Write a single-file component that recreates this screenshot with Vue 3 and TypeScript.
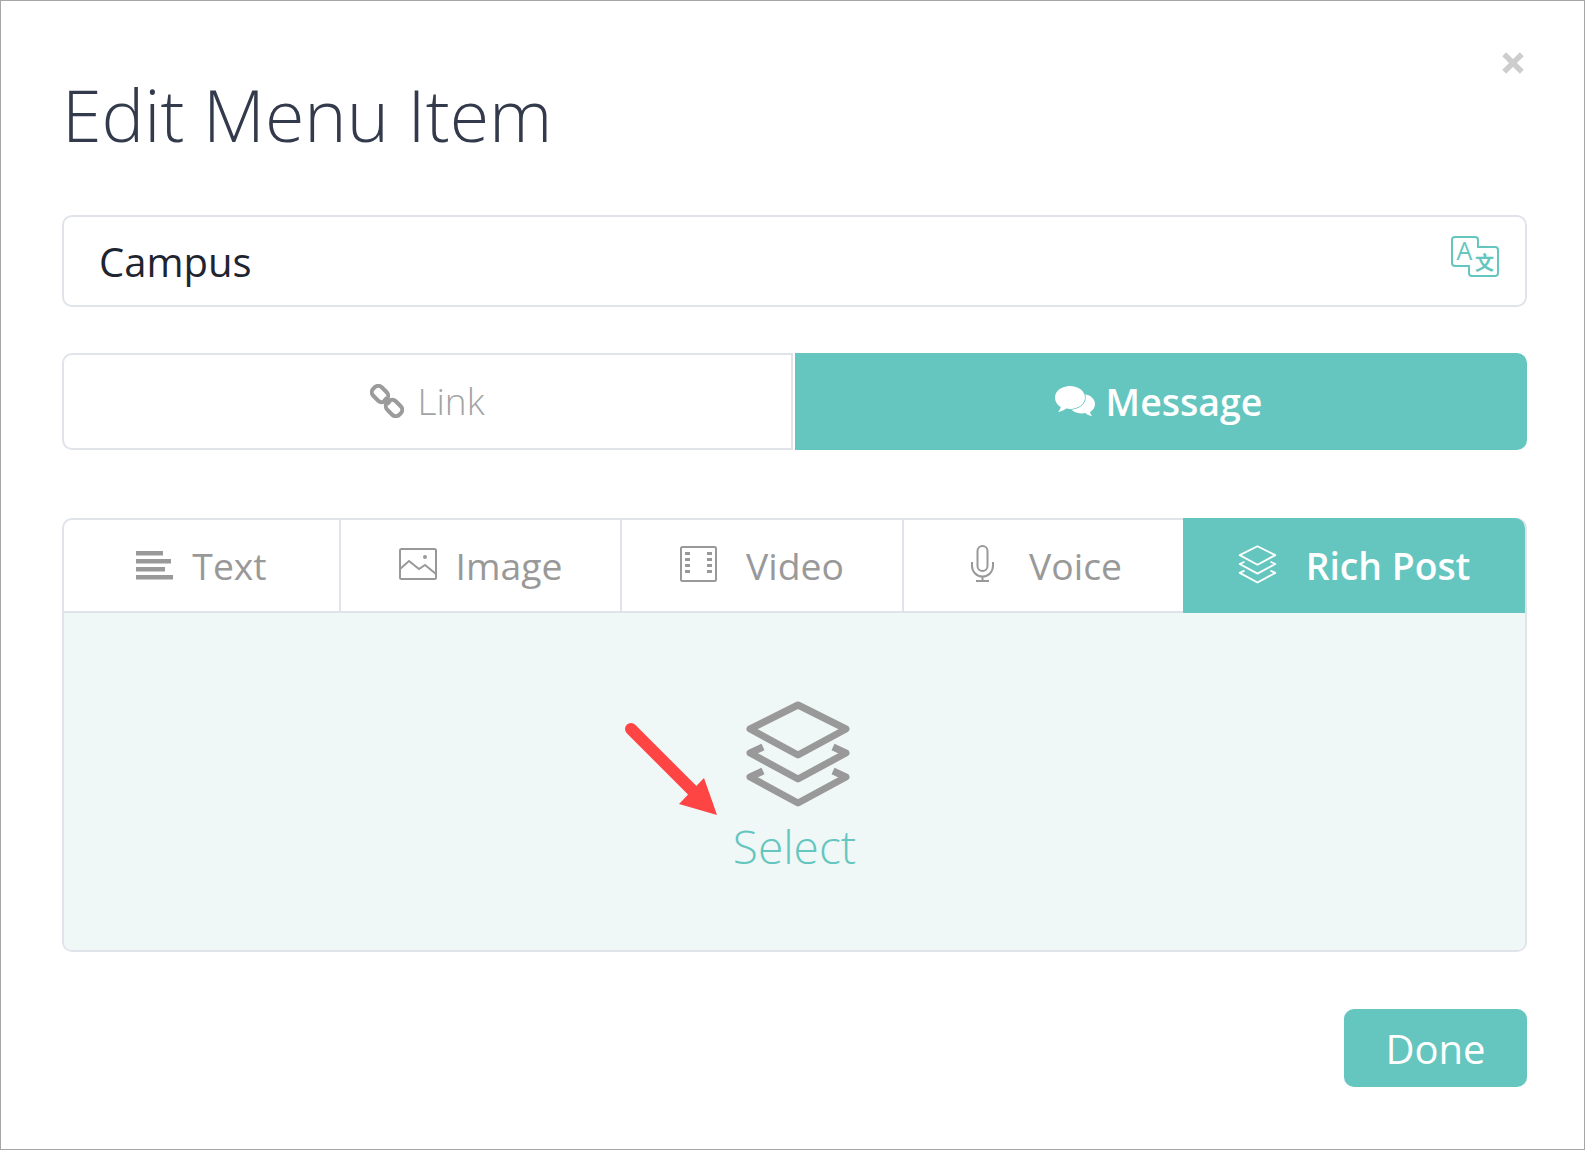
<script setup lang="ts">
const layersPath =
  'M4 30 52 6l48 24-48 26zM17 48 4 54l48 26 48-26-13-6M17 72 4 78l48 26 48-26-13-6'

const tabs = [
  { key: 'text', label: 'Text', gap: 19 },
  { key: 'image', label: 'Image', gap: 19 },
  { key: 'video', label: 'Video', gap: 29 },
  { key: 'voice', label: 'Voice', gap: 35 },
  { key: 'rich', label: 'Rich Post', gap: 29 },
]
</script>

<template>
  <div class="dialog">
    <svg class="close" viewBox="0 0 20 20">
      <path d="M2 2l16 16M18 2 2 18" />
    </svg>

    <h1 class="title">Edit Menu Item</h1>

    <div class="name-field">
      <span class="name-value">Campus</span>
      <svg class="translate" viewBox="0 0 48 41">
        <path
          class="translate-box"
          d="M4 1h20a3 3 0 0 1 3 3v7h17a3 3 0 0 1 3 3v23a3 3 0 0 1-3 3H21a3 3 0 0 1-3-3v-7H4a3 3 0 0 1-3-3V4a3 3 0 0 1 3-3z"
        />
        <text class="translate-a" x="5.500" y="24">A</text>
        <text class="translate-b" x="24" y="34">文</text>
      </svg>
    </div>

    <div class="mode-toggle">
      <div class="mode mode-link">
        <svg class="link-icon" viewBox="0 0 34 34">
          <rect x="1.500" y="4" width="17" height="12" rx="5" transform="rotate(45 10 10)" />
          <rect x="15.500" y="18" width="17" height="12" rx="5" transform="rotate(45 24 24)" />
          <path d="M14 14l6 6" />
        </svg>
        <span>Link</span>
      </div>
      <div class="mode mode-message">
        <svg class="message-icon" viewBox="0 0 40 31">
          <path
            class="bubble"
            d="M27 8c7 0 13 4 13 10 0 3.500-2 6.500-5 8 .4 1.500 1.200 3 2.200 4-2.700-.2-5-1.300-6.800-3-1 .3-2.200.4-3.400.4-7 0-13-4-13-9.500C14 12 20 8 27 8z"
          />
          <path
            class="bubble bubble-front"
            d="M15 0c8.300 0 15 5 15 11.500S23.300 23 15 23c-1.300 0-2.600-.1-3.800-.4C9 24.500 6.200 25.800 3 26c1.300-1.300 2.300-3 2.700-5C2.200 19 0 15.500 0 11.500 0 5 6.700 0 15 0z"
          />
        </svg>
        <span>Message</span>
      </div>
    </div>

    <div class="content">
      <div class="tabs">
        <div
          v-for="tab in tabs"
          :key="tab.key"
          class="tab"
          :class="{ active: tab.key === 'rich' }"
          :style="{ gap: tab.gap + 'px' }"
        >
          <svg v-if="tab.key === 'text'" class="icon-text" width="37" height="29" viewBox="0 0 37 29">
            <path class="solid" d="M0 0h27v4.500H0zM0 8h35v4.500H0zM0 16h29v4.500H0zM0 24h37v4.500H0z" />
          </svg>
          <svg v-else-if="tab.key === 'image'" width="38" height="32" viewBox="0 0 38 32">
            <rect x="1" y="1" width="36" height="30" rx="1.500" />
            <path d="M1 21l9-8 10 8 6-4 11 9" />
            <circle class="solid" cx="26" cy="9" r="2" />
          </svg>
          <svg v-else-if="tab.key === 'video'" width="37" height="36" viewBox="0 0 37 36">
            <rect x="1" y="1" width="35" height="34" rx="1.500" />
            <path
              class="solid"
              d="M5 6h5v3H5zM5 12h5v3H5zM5 18h5v3H5zM5 24h5v3H5zM27 6h5v3h-5zM27 12h5v3h-5zM27 18h5v3h-5zM27 24h5v3h-5z"
            />
          </svg>
          <svg v-else-if="tab.key === 'voice'" width="23" height="37" viewBox="0 0 23 37">
            <rect x="6.500" y="1" width="10" height="25" rx="5" />
            <path d="M1 17v4a10.500 10.500 0 0 0 21 0v-4M11.500 32v4M5 36h13" />
          </svg>
          <svg v-else width="39" height="40" viewBox="0 0 104 108">
            <path :d="layersPath" />
          </svg>
          <span>{{ tab.label }}</span>
        </div>
      </div>

      <div class="panel">
        <svg class="panel-icon" viewBox="0 0 104 108">
          <path :d="layersPath" />
        </svg>
        <span class="select">Select</span>
        <svg class="arrow" viewBox="0 0 110 110">
          <path class="arrow-line" d="M6 6l76 76" />
          <path class="arrow-head" d="M79 55 92 92 54 81z" />
        </svg>
      </div>
    </div>

    <div class="actions">
      <button class="done" type="button">Done</button>
    </div>
  </div>
</template>

<style scoped>
.dialog {
  position: relative;
  box-sizing: border-box;
  width: 1585px;
  height: 1150px;
  padding: 0 57px 0 61px;
  border: 1px solid #a6a6a6;
  background: #fff;
  font-family: 'Open Sans', 'Noto Sans', sans-serif;
  overflow: hidden;
}

.close {
  position: absolute;
  top: 51px;
  right: 60px;
  width: 22px;
  height: 22px;

  path {
    fill: none;
    stroke: #cdcdcd;
    stroke-width: 5;
  }
}

.title {
  box-sizing: border-box;
  height: 214px;
  margin: 0;
  padding-top: 64px;
  color: #333a4b;
  font-size: 71.700px;
  font-weight: 300;
  line-height: 98px;
}

.name-field {
  box-sizing: border-box;
  display: flex;
  align-items: center;
  justify-content: space-between;
  height: 92px;
  padding: 0 26px 0 35px;
  border: 2px solid #e0e4ea;
  border-radius: 10px;
}

.name-value {
  color: #1f2530;
  font-size: 40px;
}

.translate {
  width: 48px;
  height: 41px;
  margin-top: -10px;
  overflow: visible;
}

.translate-box {
  fill: none;
  stroke: #64c6bf;
  stroke-width: 2;
}

.translate-a {
  fill: #64c6bf;
  font-family: 'Open Sans', sans-serif;
  font-size: 25px;
}

.translate-b {
  fill: #64c6bf;
  font-family: 'Noto Sans CJK SC', sans-serif;
  font-size: 19px;
  font-weight: 700;
}

.mode-toggle {
  display: grid;
  grid-template-columns: 731px 1fr;
  gap: 2px;
  margin-top: 46px;
  height: 97px;
}

.mode {
  box-sizing: border-box;
  display: flex;
  align-items: center;
  justify-content: center;
  font-size: 37px;
}

.mode-link {
  gap: 13px;
  padding-bottom: 2px;
  border: 2px solid #e0e4ea;
  border-radius: 10px 0 0 10px;
  color: #a3a3a3;
  font-weight: 300;
}

.mode-message {
  gap: 11px;
  padding-right: 5px;
  border-radius: 0 10px 10px 0;
  background: #64c6bf;
  color: #fff;
  font-size: 37.500px;
  font-weight: 600;
}

.link-icon {
  width: 34px;
  height: 34px;

  rect,
  path {
    fill: none;
    stroke: #9b9b9b;
    stroke-width: 4;
  }
}

.message-icon {
  width: 40px;
  height: 31px;
}

.bubble {
  fill: #fff;
}

.bubble-front {
  stroke: #64c6bf;
  stroke-width: 1.500;
  paint-order: stroke;
}

.content {
  margin-top: 68px;
  border: 2px solid #e0e4ea;
  border-radius: 10px;
}

.tabs {
  display: grid;
  grid-template-columns: 277px 281px 282px 279px 1fr;
  height: 91px;
  border-bottom: 2px solid #e0e4ea;
}

.tab {
  display: flex;
  align-items: center;
  justify-content: center;
  border-right: 2px solid #e0e4ea;
  color: #999;
  font-size: 37.300px;

  svg {
    margin-top: -4px;
  }

  svg.icon-text {
    margin-top: 0;
  }

  svg path,
  svg rect {
    fill: none;
    stroke: #999;
    stroke-width: 2;
  }

  svg .solid {
    fill: #999;
    stroke: none;
  }

  svg circle.solid {
    fill: #999;
  }

  &:nth-child(4) {
    padding-left: 6px;
  }

  &:nth-last-child(2) {
    border-right: 0;
  }

  &.active {
    margin: -2px 0 -2px 0;
    border-right: 0;
    border-radius: 0 10px 0 0;
    background: #64c6bf;
    color: #fff;
    font-weight: 600;

    svg path {
      stroke: #fff;
      stroke-width: 5;
      stroke-linejoin: round;
    }
  }
}

.panel {
  position: relative;
  display: flex;
  flex-direction: column;
  align-items: center;
  height: 337px;
  border-radius: 0 0 8px 8px;
  background: #f0f8f7;
}

.panel-icon {
  width: 104px;
  height: 108px;
  margin-top: 86px;
  margin-left: 6px;

  path {
    fill: none;
    stroke: #999;
    stroke-width: 7;
    stroke-linejoin: round;
  }
}

.select {
  margin-top: 8px;
  color: #64c6bf;
  font-size: 46px;
  font-weight: 300;
  line-height: 62px;
}

.arrow {
  position: absolute;
  top: 110px;
  left: 561px;
  width: 110px;
  height: 110px;
}

.arrow-line {
  fill: none;
  stroke: #ff4444;
  stroke-width: 12;
  stroke-linecap: round;
}

.arrow-head {
  fill: #ff4444;
}

.actions {
  display: flex;
  justify-content: flex-end;
  margin-top: 57px;
}

.done {
  width: 183px;
  height: 78px;
  padding: 0;
  border: 0;
  border-radius: 10px;
  background: #64c6bf;
  color: #fff;
  font-family: inherit;
  font-size: 40px;
}
</style>
